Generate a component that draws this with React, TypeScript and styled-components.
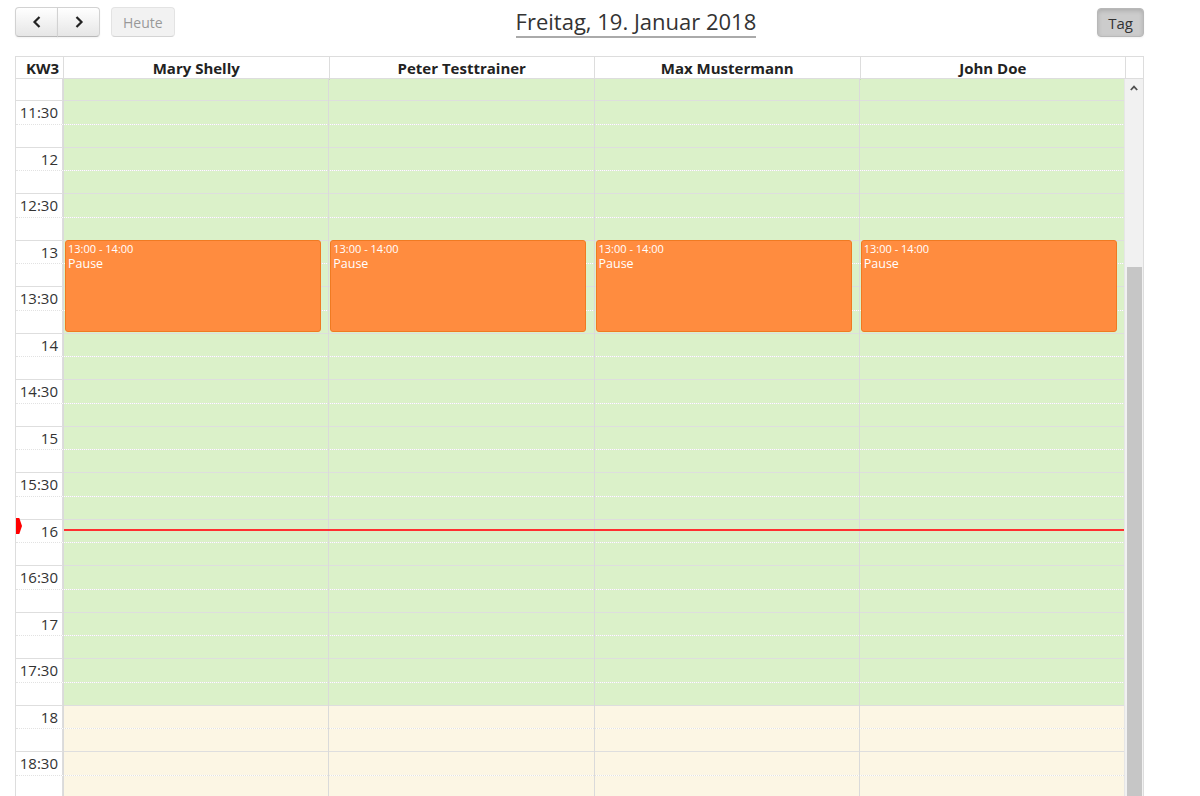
import React from "react";
import styled, { createGlobalStyle, css } from "styled-components";

const GlobalStyle = createGlobalStyle`
  html, body {
    margin: 0;
    padding: 0;
    background: #fff;
    overflow: hidden;
  }
  body {
    font-family: "Open Sans", "DejaVu Sans", sans-serif;
    font-size: 14px;
    color: #333;
  }
`;

const SLOT_H = 23.25;
const START_MIN = 11 * 60 + 15;
const PX_PER_MIN = SLOT_H / 15;
const SLOT_COUNT = 31;

const resources = ["Mary Shelly", "Peter Testtrainer", "Max Mustermann", "John Doe"];

const slots = Array.from({ length: SLOT_COUNT }, (_, i) => {
  const m = START_MIN + i * 15;
  const h = Math.floor(m / 60);
  const mm = m % 60;
  let label = "";
  if (mm === 0) label = String(h);
  if (mm === 30) label = `${h}:30`;
  return { minutes: m, label, minor: mm === 15 || mm === 45, business: m < 18 * 60 };
});

const toTop = (m: number) => (m - START_MIN) * PX_PER_MIN;

export default function App() {
  const nowTop = Math.round(toTop(16 * 60 + 6)) + 1;
  return (
    <Page>
      <GlobalStyle />
      <Toolbar>
        <ToolbarSide>
          <ButtonGroup>
            <ToolButton $first aria-label="zurück">
              <Chevron viewBox="0 0 10 14" width="10" height="14">
                <path d="M7.5 2 L2.5 7 L7.5 12" />
              </Chevron>
            </ToolButton>
            <ToolButton $last aria-label="weiter">
              <Chevron viewBox="0 0 10 14" width="10" height="14">
                <path d="M2.5 2 L7.5 7 L2.5 12" />
              </Chevron>
            </ToolButton>
          </ButtonGroup>
          <ToolButton $single disabled>
            Heute
          </ToolButton>
        </ToolbarSide>
        <ToolbarCenter>
          <Title>Freitag, 19. Januar 2018</Title>
        </ToolbarCenter>
        <ToolbarSide>
          <ToolButton $single $active>
            Tag
          </ToolButton>
        </ToolbarSide>
      </Toolbar>

      <Calendar>
        <HeadRow>
          <HeadGrid>
            <AxisHead>KW3</AxisHead>
            {resources.map((r) => (
              <ResourceHead key={r}>{r}</ResourceHead>
            ))}
          </HeadGrid>
          <Gutter />
        </HeadRow>

        <BodyRow>
          <TimeGrid>
            {slots.map((s, i) => (
              <SlotRow key={s.minutes} style={{ gridRow: i + 1 }} $minor={s.minor}>
                <AxisCell>{s.label}</AxisCell>
                <Lane $business={s.business} />
              </SlotRow>
            ))}
            {resources.map((r, i) => (
              <ResourceColumn key={r} style={{ gridColumn: i + 2 }}>
                <Event style={{ top: toTop(13 * 60), height: 60 * PX_PER_MIN - 1 }}>
                  <EventTime>13:00 - 14:00</EventTime>
                  <EventTitle>Pause</EventTitle>
                </Event>
              </ResourceColumn>
            ))}
            <NowLine style={{ top: nowTop }} />
            <NowArrow style={{ top: nowTop - 11 }} />
          </TimeGrid>
          <Scrollbar>
            <ScrollArrow>
              <svg viewBox="0 0 8 6" width="8" height="6">
                <path d="M0.8 5 L4 1.6 L7.2 5" fill="none" stroke="#505050" strokeWidth="1.8" />
              </svg>
            </ScrollArrow>
            <ScrollThumb />
          </Scrollbar>
        </BodyRow>
      </Calendar>
    </Page>
  );
}

const Page = styled.div`
  padding: 7px 0 0 15px;
  width: 1129px;
`;

const Toolbar = styled.div`
  display: flex;
  align-items: flex-start;
  height: 49px;
`;

const ToolbarSide = styled.div`
  display: flex;
  gap: 11px;
`;

const ToolbarCenter = styled.div`
  flex: 1;
  display: flex;
  justify-content: center;
`;

const Title = styled.h2`
  margin: 0;
  font-size: 22px;
  font-weight: 400;
  line-height: 28px;
  color: #333;
  border-bottom: 2px solid #aaa;
  padding-bottom: 1px;
`;

const ButtonGroup = styled.div`
  display: flex;
`;

const ToolButton = styled.button<{ $first?: boolean; $last?: boolean; $single?: boolean; $active?: boolean }>`
  height: 30px;
  padding: 0 11px;
  font-family: "Open Sans", "DejaVu Sans", sans-serif;
  font-size: 14px;
  color: #333;
  border: 1px solid #d2d2d2;
  border-bottom-color: #b8b8b8;
  background: linear-gradient(#ffffff, #e6e6e6);
  box-shadow: inset 0 1px 0 rgba(255, 255, 255, 0.2), 0 1px 2px rgba(0, 0, 0, 0.05);
  display: flex;
  align-items: center;
  justify-content: center;
  cursor: pointer;
  ${(p) =>
    p.$first &&
    css`
      width: 43px;
      border-radius: 4px 0 0 4px;
    `}
  ${(p) =>
    p.$last &&
    css`
      width: 43px;
      margin-left: -1px;
      border-radius: 0 4px 4px 0;
    `}
  ${(p) =>
    p.$single &&
    css`
      border-radius: 4px;
    `}
  &:disabled {
    opacity: 0.6;
    background: #ebebeb;
    box-shadow: none;
    color: #555;
    cursor: default;
  }
  ${(p) =>
    p.$active &&
    css`
      background: #cccccc;
      border-color: #b8b8b8;
      box-shadow: inset 0 2px 4px rgba(0, 0, 0, 0.15), 0 1px 2px rgba(0, 0, 0, 0.05);
      padding: 0 10px;
      font-size: 15px;
      height: 29px;
      margin-top: 1px;
    `}
`;

const Chevron = styled.svg`
  fill: none;
  stroke: #222;
  stroke-width: 2.2;
  stroke-linecap: butt;
`;

const Calendar = styled.div`
  border: 1px solid #ddd;
  border-bottom: none;
  width: 1127px;
`;

const HeadRow = styled.div`
  display: flex;
  height: 21px;
  border-bottom: 1px solid #ddd;
`;

const HeadGrid = styled.div`
  flex: 1;
  display: grid;
  grid-template-columns: 47px repeat(4, 1fr);
`;

const HeadCell = styled.div`
  font-weight: 700;
  font-size: 15px;
  line-height: 23px;
  color: #222;
  border-left: 1px solid #ddd;
`;

const AxisHead = styled(HeadCell)`
  border-left: none;
  text-align: right;
  padding-right: 4px;
`;

const ResourceHead = styled(HeadCell)`
  text-align: center;
`;

const Gutter = styled.div`
  width: 17px;
  border-left: 1px solid #ddd;
`;

const BodyRow = styled.div`
  display: flex;
  height: 718px;
  overflow: hidden;
`;

const TimeGrid = styled.div`
  flex: 1;
  position: relative;
  margin-top: -2px;
  display: grid;
  grid-template-columns: 47px repeat(4, 1fr);
  grid-template-rows: repeat(${SLOT_COUNT}, ${SLOT_H}px);
  align-content: start;
`;

const SlotRow = styled.div<{ $minor: boolean }>`
  grid-column: 1 / -1;
  display: grid;
  grid-template-columns: 47px 1fr;
  box-sizing: border-box;
  border-top: 1px ${(p) => (p.$minor ? "dotted #e2e2e2" : "solid #dedede")};
  &:first-child {
    border-top: none;
  }
`;

const AxisCell = styled.div`
  background: #fff;
  border-right: 1px solid #ddd;
  text-align: right;
  padding-right: 4px;
  font-size: 15px;
  line-height: 22px;
  color: #333;
`;

const Lane = styled.div<{ $business: boolean }>`
  background: ${(p) => (p.$business ? "rgba(170, 222, 126, 0.42)" : "rgba(246, 226, 170, 0.32)")};
`;

const ResourceColumn = styled.div`
  grid-row: 1 / -1;
  position: relative;
  border-left: 1px solid #dadada;
`;

const Event = styled.div`
  position: absolute;
  left: 1px;
  right: 2.7%;
  box-sizing: border-box;
  background: #ff8c3f;
  border: 1px solid #f07a22;
  border-radius: 3px;
  color: #fff;
  padding: 0 2px;
  overflow: hidden;
`;

const EventTime = styled.div`
  font-size: 11px;
  line-height: 15px;
`;

const EventTitle = styled.div`
  font-size: 12.5px;
  line-height: 16px;
`;

const NowLine = styled.div`
  position: absolute;
  z-index: 3;
  left: 48px;
  right: 0;
  height: 2px;
  background: #ff3030;
`;

const NowArrow = styled.div`
  position: absolute;
  z-index: 3;
  left: 0;
  width: 6px;
  height: 16px;
  background: red;
  clip-path: polygon(0 0, 55% 0, 100% 50%, 55% 100%, 0 100%);
`;

const Scrollbar = styled.div`
  width: 18px;
  background: #f1f1f1;
  border-left: 1px solid #e6e6e6;
  display: flex;
  flex-direction: column;
  align-items: center;
`;

const ScrollArrow = styled.div`
  height: 17px;
  width: 100%;
  display: flex;
  align-items: center;
  justify-content: center;
`;

const ScrollThumb = styled.div`
  margin-top: 171px;
  width: 15px;
  flex: 1;
  background: #c6c6c6;
`;
